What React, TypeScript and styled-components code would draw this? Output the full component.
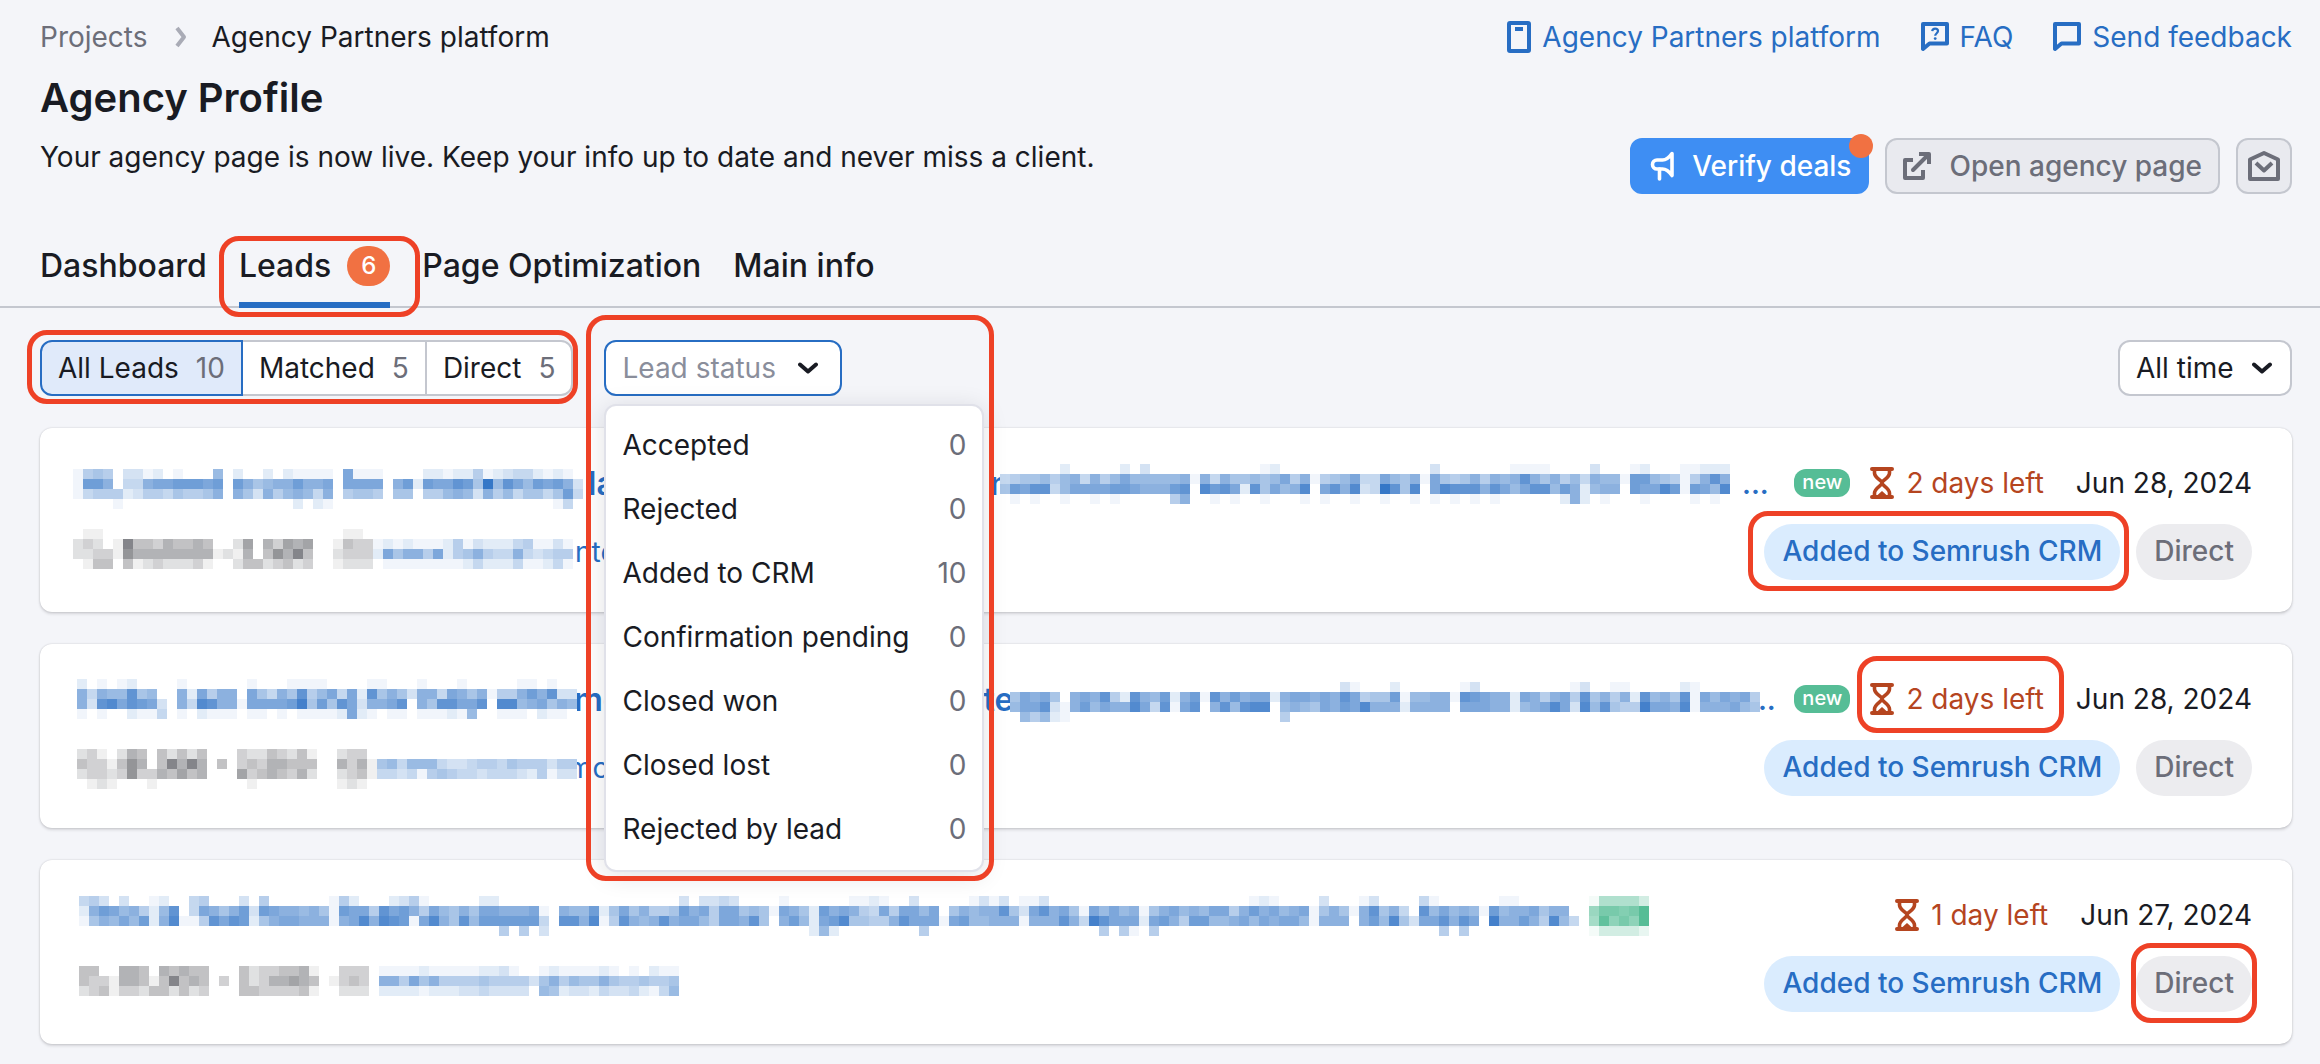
import React from "react";
import styled, { createGlobalStyle, css } from "styled-components";

const color = {
  page: "#f4f5f9",
  ink: "#191b23",
  muted: "#6c6e79",
  placeholder: "#8a8e9b",
  line: "#c4c7cf",
  blue: "#276dc3",
  orange: "#f17142",
  green: "#56bd96",
  rust: "#b5451f",
  mark: "#ee4126",
};

const GlobalStyle = createGlobalStyle`
  *, *::before, *::after { box-sizing: border-box; }
  body {
    margin: 0;
    background: ${color.page};
    color: ${color.ink};
    font-family: Inter, "Liberation Sans", sans-serif;
    font-size: 28px;
    line-height: 40px;
  }
  button, select { font: inherit; color: inherit; }
  h1, p, ul { margin: 0; padding: 0; }
  ul { list-style: none; }
`;

/* Red frame around the part being explained. */
const marked = css`
  position: relative;
  &::after {
    content: "";
    position: absolute;
    border: 5px solid ${color.mark};
    border-radius: 20px;
    pointer-events: none;
    z-index: 5;
  }
`;

const Page = styled.div`
  padding-bottom: 20px;
`;

const Header = styled.header`
  padding: 18px 28px 0 40px;
`;

const TopRow = styled.div`
  display: flex;
  justify-content: space-between;
  align-items: center;
  height: 38px;
`;

const Crumbs = styled.nav`
  display: flex;
  align-items: center;
  gap: 25px;
`;

const CrumbLink = styled.a`
  color: ${color.muted};
  text-decoration: none;
`;

const HelpLinks = styled.nav`
  display: flex;
  gap: 40px;
`;

const HelpLink = styled.a`
  display: flex;
  align-items: center;
  gap: 11px;
  color: ${color.blue};
  text-decoration: none;
`;

const Title = styled.h1`
  margin-top: 16px;
  font-size: 40px;
  line-height: 52px;
  font-weight: 600;
`;

const IntroRow = styled.div`
  display: flex;
  justify-content: space-between;
  align-items: flex-start;
  margin-top: 14px;
`;

const Intro = styled.p`
  line-height: 38px;
`;

const Actions = styled.div`
  display: flex;
  gap: 16px;
`;

const Button = styled.button<{ $primary?: boolean }>`
  position: relative;
  display: flex;
  align-items: center;
  gap: 18px;
  height: 56px;
  padding: 0 16px;
  border: 2px solid ${(p) => (p.$primary ? "#3e8ef3" : color.line)};
  border-radius: 12px;
  background: ${(p) => (p.$primary ? "#3e8ef3" : "#e9eaef")};
  color: ${(p) => (p.$primary ? "#fff" : color.muted)};
  font-weight: 500;
`;

const IconButton = styled(Button)`
  width: 56px;
  padding: 0;
  justify-content: center;
`;

const Dot = styled.span`
  position: absolute;
  top: -6px;
  right: -6px;
  width: 24px;
  height: 24px;
  border-radius: 50%;
  background: ${color.orange};
`;

const Tabs = styled.nav`
  display: flex;
  gap: 32px;
  margin-top: 30px;
  padding: 0 40px;
  border-bottom: 2px solid ${color.line};
`;

const Tab = styled.a<{ $active?: boolean }>`
  display: flex;
  align-items: center;
  gap: 16px;
  height: 84px;
  margin-bottom: -2px;
  color: ${color.ink};
  font-size: 32px;
  font-weight: 500;
  text-decoration: none;
  ${(p) =>
    p.$active &&
    css`
      ${marked}
      box-shadow: inset 0 -6px ${color.blue};
      &::after { inset: 12px -30px -9px -20px; }
    `}
`;

const Counter = styled.span`
  display: flex;
  align-items: center;
  justify-content: center;
  width: 43px;
  height: 40px;
  border-radius: 20px;
  background: ${color.orange};
  color: #fff;
  font-size: 24px;
`;

const Main = styled.main`
  padding: 32px 28px 0 40px;
`;

const Filters = styled.div`
  display: flex;
  align-items: center;
  gap: 31px;
`;

const Segments = styled.div`
  ${marked}
  display: flex;
  &::after { inset: -10px -5px -8px -13px; }
`;

const Segment = styled.button<{ $active?: boolean }>`
  display: flex;
  align-items: center;
  gap: 17px;
  height: 56px;
  padding: 0 16px;
  margin-left: -2px;
  border: 2px solid ${(p) => (p.$active ? color.blue : color.line)};
  background: ${(p) => (p.$active ? "#e0eafa" : "#fff")};
  z-index: ${(p) => (p.$active ? 1 : 0)};
  &:first-child { border-radius: 12px 0 0 12px; margin-left: 0; }
  &:last-child { border-radius: 0 12px 12px 0; }
`;

const Count = styled.span`
  color: ${color.muted};
`;

const StatusFilter = styled.div`
  ${marked}
  z-index: 4;
  &::after { inset: -25px -152px -485px -18px; }
`;

const StatusButton = styled.button`
  display: flex;
  align-items: center;
  gap: 22px;
  height: 56px;
  padding: 0 22px 0 16px;
  border: 2px solid ${color.blue};
  border-radius: 12px;
  background: #fff;
  color: ${color.placeholder};
`;

const Menu = styled.ul`
  position: absolute;
  top: 64px;
  left: 0;
  width: 380px;
  padding: 8px 0;
  border: 2px solid #e0e1e9;
  border-radius: 12px;
  background: #fff;
  box-shadow: 0 4px 24px rgba(25, 27, 35, 0.13);
`;

const MenuItem = styled.li`
  display: flex;
  align-items: center;
  justify-content: space-between;
  height: 64px;
  padding: 0 16px 2px;
`;

const PeriodFilter = styled.label`
  position: relative;
  display: flex;
  align-items: center;
  margin-left: auto;
  svg { position: absolute; right: 20px; pointer-events: none; }
`;

const PeriodSelect = styled.select`
  appearance: none;
  height: 56px;
  padding: 0 56px 0 16px;
  border: 2px solid ${color.line};
  border-radius: 12px;
  background: #fff;
`;

const Leads = styled.section`
  display: grid;
  gap: 32px;
  margin-top: 32px;
`;

const Card = styled.article`
  display: grid;
  gap: 20px;
  min-width: 0;
  padding: 36px 40px 32px 32px;
  border-radius: 12px;
  background: #fff;
  box-shadow: 0 0 2px rgba(25, 27, 35, 0.2), 0 2px 3px rgba(25, 27, 35, 0.14);
`;

const TitleRow = styled.div`
  display: flex;
  align-items: center;
  height: 40px;
  min-width: 0;
`;

const InfoRow = styled.div`
  display: flex;
  align-items: center;
  height: 56px;
  min-width: 0;
`;

const LeadLink = styled.a<{ $title?: boolean }>`
  display: flex;
  align-items: center;
  min-width: 0;
  overflow-x: clip;
  color: ${color.blue};
  text-decoration: none;
  ${(p) => p.$title && "font-size: 32px; font-weight: 600;"}
`;

const Fragment = styled.span<{ $width?: number }>`
  flex: none;
  ${(p) => p.$width && `width: ${p.$width}px;`}
`;

const Ellipsis = styled.span`
  flex: none;
  font-size: 28px;
`;

const Mosaic = styled.svg`
  position: relative;
  flex: none;
  display: block;
  overflow: visible;
`;

const Meta = styled.div`
  display: flex;
  flex: none;
  align-items: center;
  margin-left: auto;
  padding-bottom: 2px;
`;

const NewBadge = styled.span`
  height: 28px;
  margin-right: 20px;
  padding: 0 8px;
  border-radius: 12px;
  background: ${color.green};
  color: #fff;
  font-size: 20px;
  line-height: 26px;
  font-weight: 500;
`;

const Deadline = styled.span<{ $marked?: boolean }>`
  display: flex;
  align-items: center;
  gap: 12px;
  margin-right: 32px;
  color: ${color.rust};
  ${(p) =>
    p.$marked &&
    css`
      ${marked}
      &::after { inset: -23px -20px -14px -13px; }
    `}
`;

const Tags = styled.div`
  display: flex;
  flex: none;
  gap: 16px;
  margin-left: auto;
`;

const Tag = styled.span<{ $tone: "blue" | "grey"; $marked?: boolean }>`
  height: 56px;
  padding: 0 18px;
  border-radius: 28px;
  background: ${(p) => (p.$tone === "blue" ? "#daecfe" : "#ececef")};
  color: ${(p) => (p.$tone === "blue" ? color.blue : color.muted)};
  line-height: 54px;
  font-weight: 500;
  ${(p) =>
    p.$marked &&
    css`
      ${marked}
      &::after {
        inset: ${p.$tone === "blue" ? "-13px -9px -11px -16px" : "-13px -5px -11px -5px"};
      }
    `}
`;

const Chevron = () => (
  <svg width="20" height="12" viewBox="0 0 20 12" fill="none" stroke={color.ink} strokeWidth="4" strokeLinecap="round" strokeLinejoin="round" aria-hidden="true">
    <path d="M2 2.5 10 9.5l8-7" />
  </svg>
);

const CrumbArrow = () => (
  <svg width="14" height="22" viewBox="0 0 14 22" fill="none" stroke="#a9abb6" strokeWidth="4" strokeLinejoin="round" aria-hidden="true">
    <path d="M4 2l7 9-7 9" />
  </svg>
);

const BookIcon = () => (
  <svg width="24" height="32" viewBox="0 0 24 32" fill="none" aria-hidden="true">
    <rect x="2" y="2" width="20" height="28" rx="1" stroke={color.blue} strokeWidth="4" />
    <path d="M8 6h8v4H8z" fill={color.blue} />
  </svg>
);

const BubbleIcon = ({ question }: { question?: boolean }) => (
  <svg width="28" height="32" viewBox="0 0 28 32" fill="none" aria-hidden="true">
    <path d="M2 3h24v19.5H8.5L2 28z" stroke={color.blue} strokeWidth="4" strokeLinejoin="round" />
    {question && (
      <>
        <path d="M11.2 10.2c.2-1.7 1.3-2.6 2.9-2.6 1.7 0 2.9 1 2.9 2.5 0 2.1-2.8 2.2-2.8 4.7" stroke={color.blue} strokeWidth="2.2" />
        <circle cx="14.2" cy="17.6" r="1.4" fill={color.blue} />
      </>
    )}
  </svg>
);

const MegaphoneIcon = () => (
  <svg width="26" height="30" viewBox="0 0 26 30" fill="none" stroke="currentColor" strokeWidth="3.6" strokeLinejoin="round" strokeLinecap="round" aria-hidden="true">
    <path d="M24 2.5c-2.5 3.5-5 6.5-9.5 6.500H9a4.500 4.500 0 0 0 0 9h5.500c4.500 0 7 3 9.500 6.500z" />
    <path d="M11.5 18v10" />
  </svg>
);

const ExternalIcon = () => (
  <svg width="28" height="28" viewBox="0 0 28 28" fill="none" stroke="currentColor" strokeWidth="4" aria-hidden="true">
    <path d="M10 8H2v18h18v-8" strokeLinejoin="round" />
    <path d="M10 18 23 5" strokeLinecap="round" />
    <path d="M16 2h10v10" strokeLinejoin="round" />
    <path d="M19 2h7v7z" fill="currentColor" stroke="none" />
  </svg>
);

const MailIcon = () => (
  <svg width="32" height="32" viewBox="0 0 32 32" fill="none" stroke="currentColor" strokeWidth="4" strokeLinejoin="round" aria-hidden="true">
    <path d="M2 29V9.5L16 3l14 6.5V29z" />
    <path d="M8 13l8 7.5 8-7.5" />
  </svg>
);

const HourglassIcon = () => (
  <svg width="24" height="32" viewBox="0 0 24 32" fill="none" stroke={color.rust} aria-hidden="true">
    <path d="M2 2h20M2 30h20" strokeWidth="4" strokeLinecap="round" />
    <path d="M4.5 3v3c0 5 7.500 7.500 7.500 10s-7.500 5-7.500 10v3M19.500 3v3c0 5-7.500 7.500-7.500 10s7.500 5 7.500 10v3" strokeWidth="3.6" />
    <path d="M7 28.5l5-4.500 5 4.500z" fill={color.rust} stroke="none" />
  </svg>
);

type Patch = {
  rows: string[];
  tint?: string;
  /* horizontal room the patch takes in its line */
  width: number;
  x?: number;
  y?: number;
  height?: number;
};

/* Privacy mosaic: each hex digit is the strength of one 10px cell. */
const Pixels = ({ rows, tint = color.blue, width, x = 0, y = 0, height = 40 }: Patch) => {
  const columns = Math.max(...rows.map((r) => r.length));
  return (
    <Mosaic width={width} height={height} shapeRendering="crispEdges" aria-hidden="true">
      <g transform={`translate(${x} ${y})`}>
        <rect width={columns * 10} height={rows.length * 10} fill="#fff" />
        {rows.map((row, r) =>
          [...row].map((digit, c) =>
            digit === "0" ? null : (
              <rect key={`${r}-${c}`} x={c * 10} y={r * 10} width="10" height="10" fill={tint} fillOpacity={parseInt(digit, 16) / 15} />
            ),
          ),
        )}
      </g>
    </Mosaic>
  );
};

const titleOneStart = [
  "1565033120" + "1000702002" + "0211110911" + "1000022122" + "5123442121" + "0",
  "1aa8044899" + "aaa9a0a867" + "88a8890999" + "908a2a99ba" + "6e7b97a9a8" + "3",
  "1455523554" + "6556808638" + "5787480566" + "5066055787" + "385746646a" + "4",
  "0000100000" + "0000000000" + "0020210000" + "0000000000" + "0000000014" + "0",
];
const titleOneEnd = [
  "0000002000" + "0020300000" + "0000001200" + "0000000000" + "0003000000" + "0111100003" + "0001200011" + "222",
  "4566757848" + "5797777781" + "8486676795" + "8156794497" + "6819656858" + "78b8685748" + "771aa76515" + "8b8",
  "6a9bb47999" + "9aa9888ab0" + "cab92b6978" + "c09b8c34eb" + "6c09cbbb8b" + "979bb7a827" + "880a99ca1a" + "97c",
  "0101001001" + "0100000580" + "0101001000" + "1010010010" + "0101010101" + "0000002820" + "1000100001" + "010",
];
const titleTwoStart = [
  "2010120000" + "1000000100" + "0111100001" + "1000100010" + "0000110100",
  "84877b6700" + "8295880964" + "86b579492b" + "6863884986" + "81558a8b33",
  "83bc9ba930" + "84cb881999" + "9ad6a6b938" + "89b086bb99" + "b0cc789687",
  "1010021140" + "1021110110" + "1011112921" + "0110111217" + "0011102110",
];
const titleTwoEnd = [
  "0000000000" + "0000000000" + "0000000000" + "0003100020" + "0000013000" + "0000001300" + "1100000210" + "00000",
  "698960898b" + "52b87a28a1" + "b8a8992899" + "898b9566a1" + "77881ba988" + "2985895b68" + "582b786b19" + "79895",
  "799b318a79" + "88c94b19b0" + "8b7bcc0787" + "698a9c8882" + "8888099988" + "2789c93c7b" + "655d998c18" + "88976",
  "0757210000" + "0000000000" + "0000000500" + "0000000000" + "0000000000" + "0000000000" + "0000000000" + "00000",
];
const titleThree = [
  "4530300120" + "0450003050" + "0000015200" + "0235100000" + "2200000000" + "0000000000" + "3033430000" + "1000000112" +
    "1003000001" + "3130113000" + "0000000000" + "0000000121" + "0000300013" + "0000410000" + "0011000000",
  "28a978527b" + "049868a3a9" + "887861a995" + "b9a8597686" + "9988891087" + "7a26968556" + "a895996761" + "9862a89854" +
    "9599790687" + "88b639b896" + "1979781689" + "7879958a89" + "789168618b" + "6840b79787" + "1a78896880",
  "168797a28c" + "115b9ba268" + "99888189c8" + "cba19c86b7" + "aaaaaa40bb" + "8c15b878b8" + "9975998b60" + "8a729ac665" +
    "58b99919a7" + "78881888b8" + "4db99929a8" + "5aa7789798" + "997188808a" + "7c6399b8b9" + "0d88a85c74",
  "0000000000" + "0000000000" + "0000000000" + "0000000000" + "0050503000" + "0000000000" + "0000000000" + "0002720000" +
    "0000500000" + "0000000000" + "0050510500" + "0000000000" + "0000000000" + "0000005050" + "0000000000",
];
const titleThreeBadge = ["177774", "9ccbcf", "8eacaf", "144442"];

const infoOneGrey = [
  "011000000000000000000000000110",
  "232018443544540026053656001433",
  "223317555555551215047584002333",
  "014404123222310024423423001222",
];
const infoOneBlue = [
  "00000000000000000000",
  "12121112513222451131",
  "29688592568544843455",
  "01111111124222411241",
];
const infoTwoGrey = [
  "231025404242400032243241002330",
  "433147504858504034355444005351",
  "233237335464500063454352002341",
  "012100010000000001000000001210",
];
const infoTwoBlue = ["00000000000000000000", "67477743345546555355", "44341565443444325133", "00000000000000000000"];
const infoThreeGrey = [
  "440055405454400042334451003330",
  "433155414845403042355654013430",
  "234133244242300044333341002220",
];
const infoThreeBlue = [
  "111121111122310012111121010211",
  "885968555565555368576686556556",
  "222212223343333076233243342147",
];

const statuses: [string, number][] = [
  ["Accepted", 0],
  ["Rejected", 0],
  ["Added to CRM", 10],
  ["Confirmation pending", 0],
  ["Closed won", 0],
  ["Closed lost", 0],
  ["Rejected by lead", 0],
];

type LeadProps = {
  title: React.ReactNode;
  info: React.ReactNode;
  isNew?: boolean;
  left: string;
  date: string;
  mark?: "deadline" | "status" | "source";
};

const LeadCard = ({ title, info, isNew, left, date, mark }: LeadProps) => (
  <Card>
    <TitleRow>
      <LeadLink $title href="#lead" aria-label="Lead">
        {title}
      </LeadLink>
      <Meta>
        {isNew && <NewBadge>new</NewBadge>}
        <Deadline $marked={mark === "deadline"}>
          <HourglassIcon />
          {left}
        </Deadline>
        <time>{date}</time>
      </Meta>
    </TitleRow>
    <InfoRow>
      {info}
      <Tags>
        <Tag $tone="blue" $marked={mark === "status"}>Added to Semrush CRM</Tag>
        <Tag $tone="grey" $marked={mark === "source"}>Direct</Tag>
      </Tags>
    </InfoRow>
  </Card>
);

export default function App() {
  return (
    <Page>
      <GlobalStyle />
      <Header>
        <TopRow>
          <Crumbs aria-label="Breadcrumb">
            <CrumbLink href="#projects">Projects</CrumbLink>
            <CrumbArrow />
            <span>Agency Partners platform</span>
          </Crumbs>
          <HelpLinks aria-label="Help">
            <HelpLink href="#platform"><BookIcon />Agency Partners platform</HelpLink>
            <HelpLink href="#faq"><BubbleIcon question />FAQ</HelpLink>
            <HelpLink href="#feedback"><BubbleIcon />Send feedback</HelpLink>
          </HelpLinks>
        </TopRow>
        <Title>Agency Profile</Title>
        <IntroRow>
          <Intro>Your agency page is now live. Keep your info up to date and never miss a client.</Intro>
          <Actions>
            <Button $primary type="button"><MegaphoneIcon />Verify deals<Dot /></Button>
            <Button type="button"><ExternalIcon />Open agency page</Button>
            <IconButton type="button" aria-label="Messages"><MailIcon /></IconButton>
          </Actions>
        </IntroRow>
      </Header>

      <Tabs aria-label="Profile sections">
        <Tab href="#dashboard">Dashboard</Tab>
        <Tab href="#leads" $active aria-current="page">Leads<Counter>6</Counter></Tab>
        <Tab href="#optimization">Page Optimization</Tab>
        <Tab href="#main">Main info</Tab>
      </Tabs>

      <Main>
        <Filters>
          <Segments role="group" aria-label="Lead source">
            <Segment type="button" $active aria-pressed="true">All Leads<Count>10</Count></Segment>
            <Segment type="button">Matched<Count>5</Count></Segment>
            <Segment type="button">Direct<Count>5</Count></Segment>
          </Segments>
          <StatusFilter>
            <StatusButton type="button" aria-haspopup="listbox" aria-expanded="true">Lead status<Chevron /></StatusButton>
            <Menu role="listbox" aria-label="Lead status">
              {statuses.map(([name, count]) => (
                <MenuItem key={name} role="option" aria-selected="false">{name}<Count>{count}</Count></MenuItem>
              ))}
            </Menu>
          </StatusFilter>
          <PeriodFilter>
            <PeriodSelect aria-label="Period"><option>All time</option></PeriodSelect>
            <Chevron />
          </PeriodFilter>
        </Filters>

        <Leads>
          <LeadCard
            isNew
            left="2 days left"
            date="Jun 28, 2024"
            mark="status"
            title={
              <>
                <Pixels rows={titleOneStart} width={516} x={1} y={5} />
                <Fragment $width={402}>la</Fragment>
                <Fragment $width={10}>n</Fragment>
                <Pixels rows={titleOneEnd} width={742} />
                <Ellipsis>...</Ellipsis>
              </>
            }
            info={
              <>
                <Pixels rows={infoOneGrey} tint={color.ink} width={301} x={1} y={5} height={56} />
                <LeadLink href="#site"><Pixels rows={infoOneBlue} width={202} y={5} height={56} /><Fragment>nte</Fragment></LeadLink>
              </>
            }
          />
          <LeadCard
            isNew
            left="2 days left"
            date="Jun 28, 2024"
            mark="deadline"
            title={
              <>
                <Pixels rows={titleTwoStart} width={502} x={5} y={-1} />
                <Fragment $width={390}>mo</Fragment>
                <Fragment $width={46}>nte</Fragment>
                <Pixels rows={titleTwoEnd} width={739} y={2} />
                <Ellipsis>...</Ellipsis>
              </>
            }
            info={
              <>
                <Pixels rows={infoTwoGrey} tint={color.ink} width={305} x={5} y={9} height={56} />
                <LeadLink href="#site"><Pixels rows={infoTwoBlue} width={191} y={9} height={56} /><Fragment>mc</Fragment></LeadLink>
              </>
            }
          />
          <LeadCard
            left="1 day left"
            date="Jun 27, 2024"
            mark="source"
            title={
              <>
                <Pixels rows={titleThree} width={1517} x={7} />
                <Pixels rows={titleThreeBadge} tint={color.green} width={60} />
              </>
            }
            info={
              <>
                <Pixels rows={infoThreeGrey} tint={color.ink} width={307} x={7} y={10} height={56} />
                <LeadLink href="#site"><Pixels rows={infoThreeBlue} width={300} y={10} height={56} /></LeadLink>
              </>
            }
          />
        </Leads>
      </Main>
    </Page>
  );
}
